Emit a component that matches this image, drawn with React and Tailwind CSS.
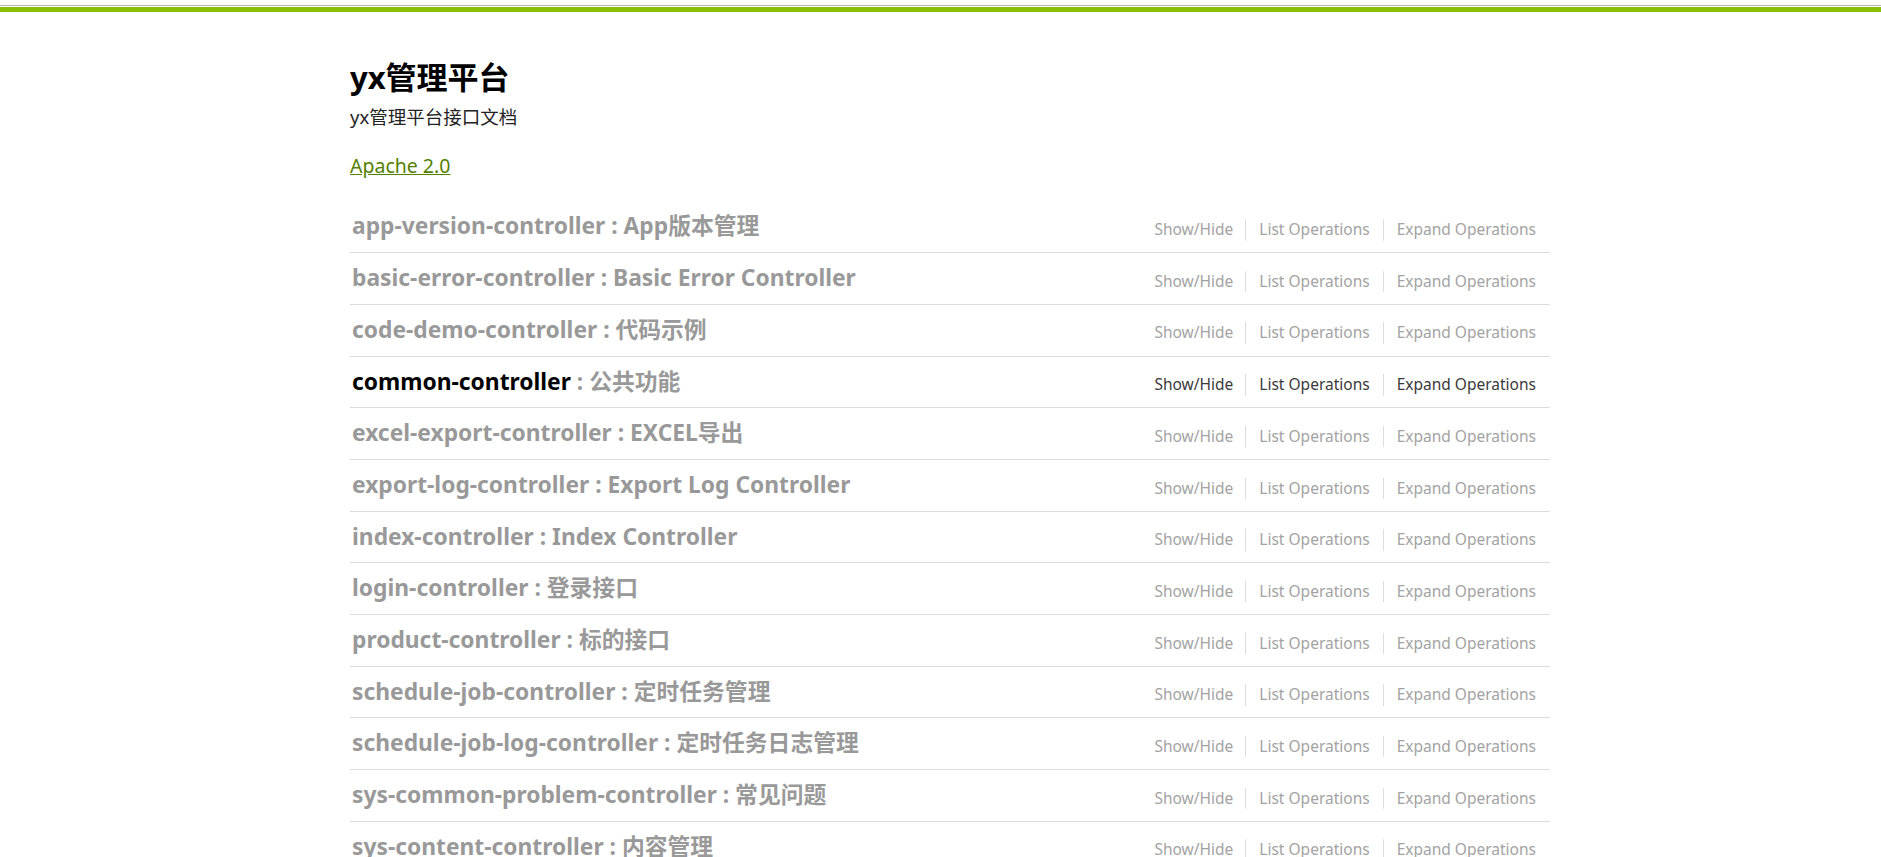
const RESOURCES = [
  { name: 'app-version-controller', desc: 'App版本管理' },
  { name: 'basic-error-controller', desc: 'Basic Error Controller' },
  { name: 'code-demo-controller', desc: '代码示例' },
  { name: 'common-controller', desc: '公共功能', active: true },
  { name: 'excel-export-controller', desc: 'EXCEL导出' },
  { name: 'export-log-controller', desc: 'Export Log Controller' },
  { name: 'index-controller', desc: 'Index Controller' },
  { name: 'login-controller', desc: '登录接口' },
  { name: 'product-controller', desc: '标的接口' },
  { name: 'schedule-job-controller', desc: '定时任务管理' },
  { name: 'schedule-job-log-controller', desc: '定时任务日志管理' },
  { name: 'sys-common-problem-controller', desc: '常见问题' },
  { name: 'sys-content-controller', desc: '内容管理' },
  { name: 'sys-dict-controller', desc: '字典管理' },
];

const FONT = { fontFamily: '"Noto Sans", "Noto Sans CJK SC", sans-serif' };

// one resource heading row, swagger style
const Resource = ({ item }) => {
  const linkColor = item.active ? 'text-[#3a3a3a]' : 'text-[#a3a3a3]';
  return (
    <div className="flex items-center justify-between h-[50.7px] border-b border-[#ddd] box-content">
      <h2 className="text-[22.8px] font-bold leading-none text-[#999] pl-[2px]">
        <span className={item.active ? 'text-black' : ''}>{item.name}</span>
        {' : '}
        {item.desc}
      </h2>
      <ul className={`flex items-center text-[15.5px] leading-none mt-[6px] mr-[14px] ${linkColor}`}>
        <li className="pr-[12px] py-[3px] border-r border-[#ddd]">Show/Hide</li>
        <li className="px-[13px] py-[3px] border-r border-[#ddd]">List Operations</li>
        <li className="pl-[13px] py-[3px]">Expand Operations</li>
      </ul>
    </div>
  );
};

export default function App() {
  return (
    <div className="h-[857px] overflow-hidden bg-white" style={FONT}>
      <div className="h-[5px]" />
      <div className="h-px bg-[#b5b5b5]" />
      <div className="h-px" />
      <div className="h-[5px] bg-[#89bf04]" />

      <div className="w-[1200px] ml-[350px]">
        <div className="pt-[50px]">
          <h1 className="text-[31px] font-bold leading-none text-black">yx管理平台</h1>
          <p className="mt-[15px] text-[18.5px] leading-none text-[#222]">yx管理平台接口文档</p>
          <a className="block w-fit mt-[29px] text-[19.5px] leading-none text-[#547f00] underline">
            Apache 2.0
          </a>
        </div>

        <div className="mt-[26.5px]">
          {RESOURCES.map((r) => (
            <Resource key={r.name} item={r} />
          ))}
        </div>
      </div>
    </div>
  );
}
